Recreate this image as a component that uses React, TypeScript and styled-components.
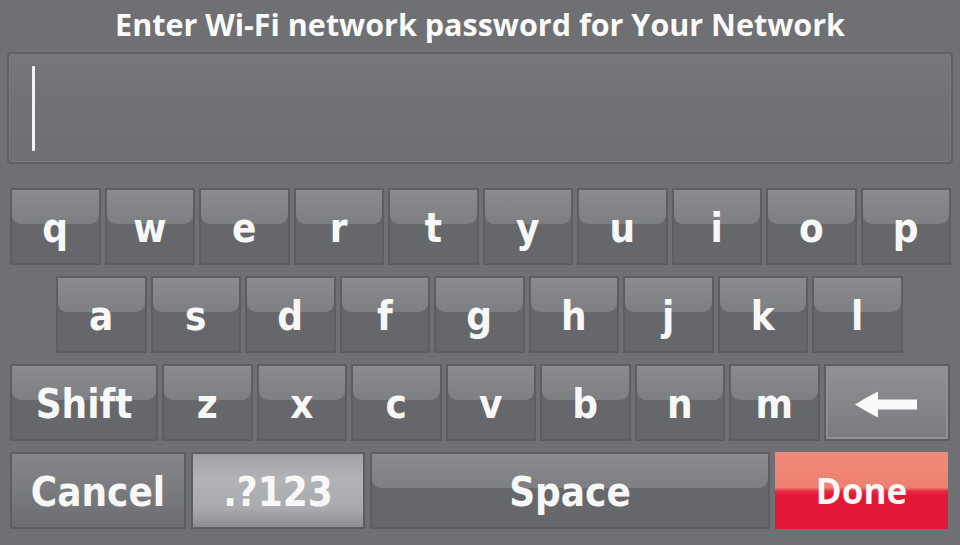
import React from "react";
import styled, { createGlobalStyle, css } from "styled-components";

const GlobalStyle = createGlobalStyle`
  html, body {
    margin: 0;
    padding: 0;
    background: #6f7074;
  }
  #root {
    width: 960px;
    height: 545px;
    overflow: hidden;
  }
`;

type Variant = "plain" | "cancel" | "symbols" | "back" | "done";

const rowOne = ["q", "w", "e", "r", "t", "y", "u", "i", "o", "p"];
const rowTwo = ["a", "s", "d", "f", "g", "h", "j", "k", "l"];
const rowThree = ["z", "x", "c", "v", "b", "n", "m"];

const BackArrow = () => (
  <svg width="63" height="27" viewBox="0 0 63 27">
    <path d="M0 13.5 Q12 6 23 0.5 L23 8.5 L62 8.5 L62 18.5 L23 18.5 L23 26.5 Q12 21 0 13.5 Z" fill="#fafafa" />
  </svg>
);

type KeyProps = { w: number; variant?: Variant; children: React.ReactNode };

const KeyButton = ({ w, variant, children }: KeyProps) => (
  <Key $w={w} $variant={variant}>
    <Label>{children}</Label>
  </Key>
);

const App = () => {
  return (
    <>
      <GlobalStyle />
      <Screen>
        <Title>Enter Wi-Fi network password for Your Network</Title>
        <Field>
          <Cursor />
        </Field>
        <Keyboard>
          <Row $indent={10}>
            {rowOne.map((k) => (
              <KeyButton key={k} w={90.5}>
                {k}
              </KeyButton>
            ))}
          </Row>
          <Row $indent={56}>
            {rowTwo.map((k) => (
              <KeyButton key={k} w={90.5}>
                {k}
              </KeyButton>
            ))}
          </Row>
          <Row $indent={10}>
            <KeyButton w={148}>Shift</KeyButton>
            {rowThree.map((k) => (
              <KeyButton key={k} w={90.5}>
                {k}
              </KeyButton>
            ))}
            <KeyButton w={126} variant="back">
              <BackArrow />
            </KeyButton>
          </Row>
          <Row $indent={10} $gap={5}>
            <KeyButton w={176} variant="cancel">
              Cancel
            </KeyButton>
            <KeyButton w={174} variant="symbols">
              .?123
            </KeyButton>
            <KeyButton w={400}>Space</KeyButton>
            <KeyButton w={173} variant="done">
              Done
            </KeyButton>
          </Row>
        </Keyboard>
      </Screen>
    </>
  );
};

export default App;

const Screen = styled.div`
  width: 960px;
  height: 545px;
  display: flex;
  flex-direction: column;
`;

const Title = styled.h1`
  margin: 0;
  height: 50px;
  line-height: 48px;
  text-align: center;
  color: #fafafa;
  font-family: "Open Sans", "Liberation Sans", sans-serif;
  font-weight: 700;
  font-size: 30.5px;
`;

const Field = styled.div`
  margin: 2px 7px 0 7px;
  height: 108px;
  border: 2px solid #606165;
  border-radius: 4px;
  background: linear-gradient(#77787c, #717276 40%, #6f7074);
  box-shadow: inset 0 0 0 1px #7a7b7f;
  display: flex;
  align-items: center;
  padding-left: 23px;
`;

const Cursor = styled.div`
  width: 3px;
  height: 85px;
  border-radius: 1px;
  background: #f4f4f4;
`;

const Keyboard = styled.div`
  margin-top: 24px;
  display: flex;
  flex-direction: column;
  gap: 11px;
`;

const Row = styled.div<{ $indent: number; $gap?: number }>`
  display: flex;
  height: 77px;
  gap: ${(p) => p.$gap ?? 4}px;
  padding-left: ${(p) => p.$indent}px;
`;

const glossy = css`
  background: #66676b;
  &::before {
    content: "";
    position: absolute;
    top: 0;
    left: 0;
    right: 0;
    height: 46%;
    border-radius: 0 0 9px 9px;
    background: linear-gradient(#8a8b8f, #7e7f83);
  }
`;

const variants: Record<Variant, ReturnType<typeof css>> = {
  plain: glossy,
  cancel: css`
    background: linear-gradient(#86878b, #7a7b7f 50%, #6c6d71);
  `,
  symbols: css`
    background: linear-gradient(#a2a3a6, #b2b3b6 35%, #a9aaad 75%, #8c8d91);
  `,
  back: css`
    background: linear-gradient(#929397, #85868a 50%, #7a7b7f);
    box-shadow: inset 0 0 0 2px #8f9094;
  `,
  done: css`
    border: none;
    background: linear-gradient(#f08a7b, #ee8070 46%, #e6293f 51%, #e31837 56%, #e31837);
    font-family: "Open Sans", "Liberation Sans", sans-serif;
    font-size: 35px;
    padding-bottom: 4px;
  `,
};

const Key = styled.div<{ $w: number; $variant?: Variant }>`
  position: relative;
  box-sizing: border-box;
  flex: 0 0 ${(p) => p.$w}px;
  height: 100%;
  border: 2px solid #5d5e62;
  display: flex;
  align-items: center;
  justify-content: center;
  color: #f7f7f7;
  font-family: "DejaVu Sans Condensed", "DejaVu Sans", sans-serif;
  font-weight: 700;
  font-size: 40px;
  overflow: hidden;
  ${(p) => variants[p.$variant ?? "plain"]}
`;

const Label = styled.span`
  position: relative;
  display: flex;
  align-items: center;
  padding-top: 3px;
`;
